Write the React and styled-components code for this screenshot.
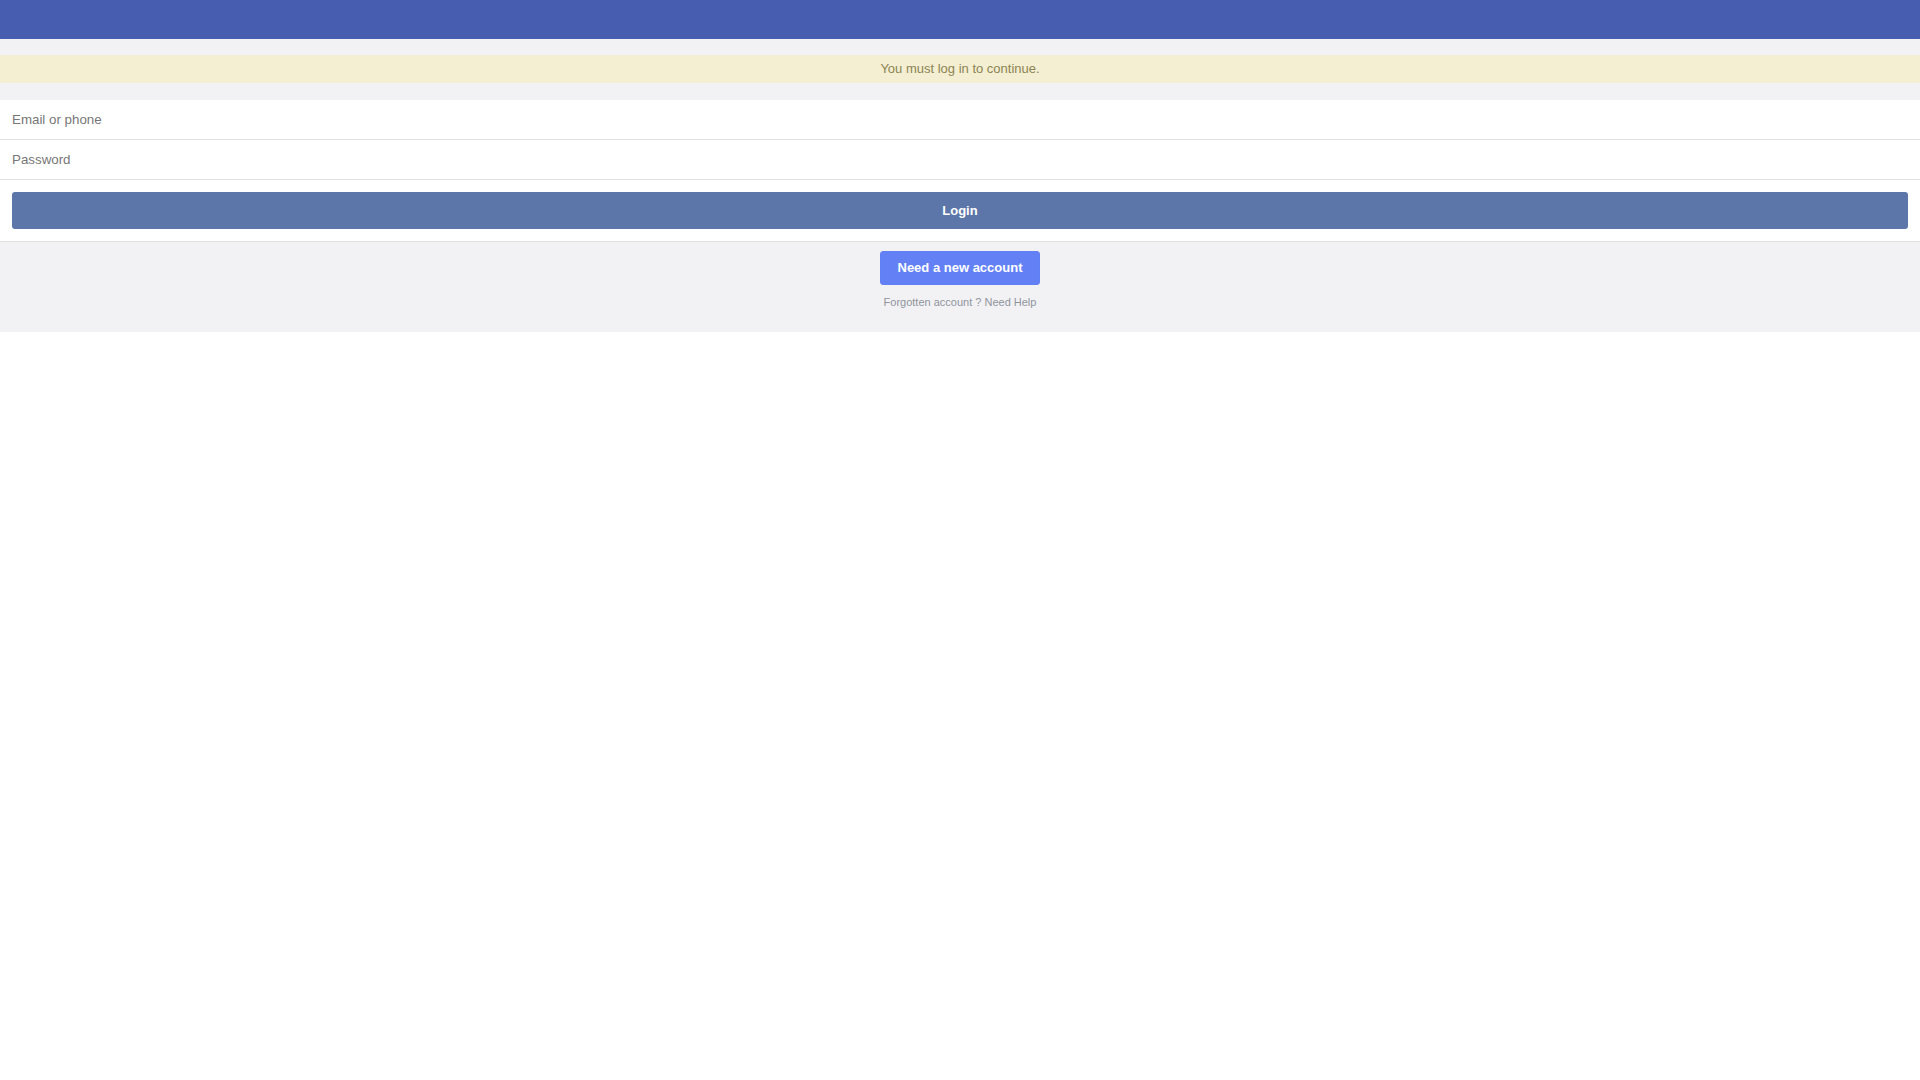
import React from "react";
import styled, { createGlobalStyle } from "styled-components";

const GlobalStyle = createGlobalStyle`
  html, body {
    margin: 0;
    padding: 0;
    background-color: #ffffff;
    font-family: "Liberation Sans", Arial, Helvetica, sans-serif;
  }
  * {
    box-sizing: border-box;
  }
`;

const Header = styled.header`
  height: 39px;
  background-color: #465db0;
`;

const NoticeBand = styled.div`
  background-color: #f2f2f5;
  padding: 16px 0 17px;
`;

const Notice = styled.div`
  height: 28px;
  line-height: 27px;
  text-align: center;
  background-color: #f4eed2;
  color: #8b8553;
  font-size: 13px;
`;

const Form = styled.form`
  display: flex;
  flex-flow: column nowrap;
  background-color: #ffffff;
`;

const Field = styled.input`
  width: 100%;
  height: 40px;
  border: none;
  border-bottom: 1px solid #e1e1e1;
  padding: 0 12px;
  font-family: "Liberation Sans", Arial, sans-serif;
  font-size: 13.333px;
  color: #333;
  background: #ffffff;
  outline: none;

  &::placeholder {
    color: #777777;
  }
`;

const SubmitRow = styled.div`
  padding: 12px 12px;
  border-bottom: 1px solid #e1e1e1;
`;

const LoginButton = styled.button`
  width: 100%;
  height: 37px;
  border: none;
  border-radius: 3px;
  background-color: #5d76a9;
  color: #ffffff;
  font-family: "Liberation Sans", Arial, sans-serif;
  font-size: 13px;
  font-weight: 700;
  cursor: pointer;
`;

const Footer = styled.div`
  display: flex;
  flex-flow: column nowrap;
  align-items: center;
  background-color: #f2f2f5;
  padding: 9px 0 23px;
`;

const NewAccountButton = styled.button`
  height: 34px;
  padding: 0 17px 1px;
  border: 1px solid #6080f4;
  border-radius: 3px;
  background-color: #6381f5;
  color: #ffffff;
  font-family: "Liberation Sans", Arial, sans-serif;
  font-size: 13px;
  font-weight: 700;
  cursor: pointer;
`;

const HelpLinks = styled.div`
  margin-top: 11px;
  font-size: 11px;
  line-height: 13px;
  color: #90949c;
`;

const HelpLink = styled.a`
  color: inherit;
  text-decoration: none;
  cursor: pointer;
`;

export default function App() {
  return (
    <>
      <GlobalStyle />
      <Header />
      <NoticeBand>
        <Notice>You must log in to continue.</Notice>
      </NoticeBand>
      <Form onSubmit={(e) => e.preventDefault()}>
        <Field type="text" placeholder="Email or phone" />
        <Field type="password" placeholder="Password" />
        <SubmitRow>
          <LoginButton type="submit">Login</LoginButton>
        </SubmitRow>
      </Form>
      <Footer>
        <NewAccountButton type="button">Need a new account</NewAccountButton>
        <HelpLinks>
          <HelpLink>Forgotten account ?</HelpLink> <HelpLink>Need Help</HelpLink>
        </HelpLinks>
      </Footer>
    </>
  );
}
